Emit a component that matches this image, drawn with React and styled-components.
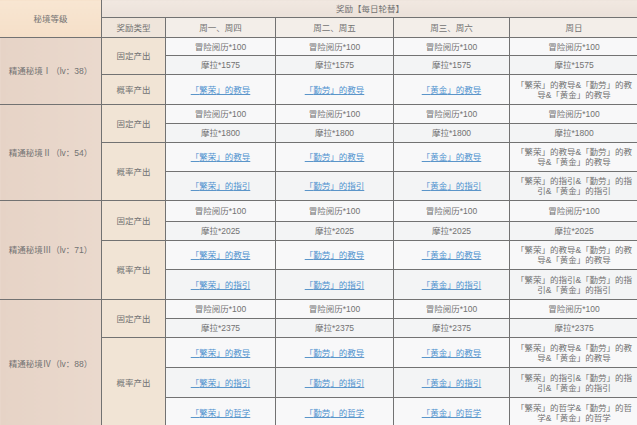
import React from "react";
import styled, { createGlobalStyle } from "styled-components";

const GlobalStyle = createGlobalStyle`
  html, body {
    margin: 0;
    padding: 0;
    background: #ffffff;
  }
  body {
    font-family: "Liberation Sans", "Noto Sans CJK SC", sans-serif;
  }
`;

const Frame = styled.div`
  width: 637px;
  height: 425px;
  overflow: hidden;
  background: #ffffff;
`;

const Table = styled.table`
  border-collapse: collapse;
  table-layout: fixed;
  width: 639px;
  margin: -1px 0 0 -1px;
  font-size: 8.5px;
  line-height: 10px;
  color: #727272;

  td {
    border: 1px solid #727272;
    padding: 0 5px;
    text-align: center;
    vertical-align: middle;
    box-sizing: border-box;
  }
`;

const HeadCorner = styled.td`
  background: linear-gradient(#f8e6d2, #f5dfc8);
`;

const HeadTop = styled.td`
  background: linear-gradient(#f1e8e1, #ebe1d9);
`;

const HeadCell = styled.td`
  background: ${(p) => (p.$type ? "#efe5db" : "#f3eee9")};
`;

const LevelCell = styled.td`
  background: linear-gradient(90deg, #e6d3c6, #ead9cd);
  white-space: nowrap;
`;

const TypeCell = styled.td`
  background: #f1e4d5;
`;

const DataCell = styled.td`
  background: ${(p) => (p.$alt ? "#f3f4f5" : "#f8f8f9")};
  && {
    padding: ${(p) => (p.$wide ? "0 3px" : "0 5px")};
  }
`;

const Link = styled.span`
  color: #4f92cf;
  text-decoration: underline;
  text-decoration-color: #5b95c9;
  text-underline-offset: 1px;
`;

const levels = [
  { name: "精通秘境Ⅰ（lv：38）", mora: 1575, prob: ["教导"], h: [18, 19, 30] },
  { name: "精通秘境Ⅱ（lv：54）", mora: 1800, prob: ["教导", "指引"], h: [19, 19, 29, 29] },
  { name: "精通秘境Ⅲ（lv：71）", mora: 2025, prob: ["教导", "指引"], h: [21, 19, 29, 30] },
  { name: "精通秘境Ⅳ（lv：88）", mora: 2375, prob: ["教导", "指引", "哲学"], h: [19, 19, 30, 30, 30] },
];

const books = ["繁荣", "勤劳", "黄金"];

const Group = ({ level }) => {
  const span = 2 + level.prob.length;
  return (
    <>
      <tr style={{ height: level.h[0] }}>
        <LevelCell rowSpan={span}>{level.name}</LevelCell>
        <TypeCell rowSpan={2}>固定产出</TypeCell>
        <DataCell>冒险阅历*100</DataCell>
        <DataCell>冒险阅历*100</DataCell>
        <DataCell>冒险阅历*100</DataCell>
        <DataCell>冒险阅历*100</DataCell>
      </tr>
      <tr style={{ height: level.h[1] }}>
        <DataCell $alt>摩拉*{level.mora}</DataCell>
        <DataCell $alt>摩拉*{level.mora}</DataCell>
        <DataCell $alt>摩拉*{level.mora}</DataCell>
        <DataCell $alt>摩拉*{level.mora}</DataCell>
      </tr>
      {level.prob.map((kind, i) => (
        <tr key={kind} style={{ height: level.h[2 + i] }}>
          {i === 0 && <TypeCell rowSpan={level.prob.length}>概率产出</TypeCell>}
          {books.map((b) => (
            <DataCell key={b} $alt={i % 2 === 1}>
              <Link>「{b}」的{kind}</Link>
            </DataCell>
          ))}
          <DataCell $alt={i % 2 === 1} $wide>
            {books.map((b) => `「${b}」的${kind}`).join("&")}
          </DataCell>
        </tr>
      ))}
    </>
  );
};

export default function App() {
  return (
    <Frame>
      <GlobalStyle />
      <Table>
        <colgroup>
          <col style={{ width: 102 }} />
          <col style={{ width: 64 }} />
          <col style={{ width: 110 }} />
          <col style={{ width: 118 }} />
          <col style={{ width: 116 }} />
          <col style={{ width: 129 }} />
        </colgroup>
        <tbody>
          <tr style={{ height: 18 }}>
            <HeadCorner rowSpan={2}>秘境等级</HeadCorner>
            <HeadTop colSpan={5}>奖励【每日轮替】</HeadTop>
          </tr>
          <tr style={{ height: 20 }}>
            <HeadCell $type>奖励类型</HeadCell>
            <HeadCell>周一、周四</HeadCell>
            <HeadCell>周二、周五</HeadCell>
            <HeadCell>周三、周六</HeadCell>
            <HeadCell>周日</HeadCell>
          </tr>
          {levels.map((lv) => (
            <Group key={lv.name} level={lv} />
          ))}
        </tbody>
      </Table>
    </Frame>
  );
}
